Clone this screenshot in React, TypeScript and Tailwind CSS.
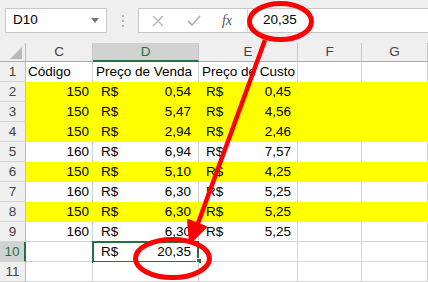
import React from "react";

type Row = {
  n: number;
  c?: string;
  d?: string;
  e?: string;
  yellow?: boolean;
  header?: boolean;
};

const rows: Row[] = [
  { n: 1, header: true },
  { n: 2, c: "150", d: "0,54", e: "0,45", yellow: true },
  { n: 3, c: "150", d: "5,47", e: "4,56", yellow: true },
  { n: 4, c: "150", d: "2,94", e: "2,46", yellow: true },
  { n: 5, c: "160", d: "6,94", e: "7,57" },
  { n: 6, c: "150", d: "5,10", e: "4,25", yellow: true },
  { n: 7, c: "160", d: "6,30", e: "5,25" },
  { n: 8, c: "150", d: "6,30", e: "5,25", yellow: true },
  { n: 9, c: "160", d: "6,30", e: "5,25" },
  { n: 10 },
  { n: 11 },
];

const font = { fontFamily: '"Liberation Sans", Arial, sans-serif' };

function DataRow({ r, next }: { r: Row; next?: Row }) {
  const yellow = !!r.yellow;
  const bottomGray = !yellow && !(next && next.yellow) && r.n !== 1;
  const rowBg = yellow ? "bg-[#ffff00]" : "bg-white";
  const vb = yellow ? "border-[#ffff00]" : "border-[#d4d4d4]";
  const hb = bottomGray ? "border-b border-b-[#d4d4d4]" : "";
  const sel = r.n === 10;
  return (
    <div className="grid grid-cols-[26px_67px_106px_99px_64px_66px] h-[20px] text-[13.5px] text-black leading-none">
      <div
        className={`flex items-center justify-center border-b border-b-[#d4d4d4] ${
          sel
            ? "bg-[#d2d2d2] text-[#217346] border-r-2 border-r-[#217346]"
            : "bg-[#efefef] text-[#444] border-r border-r-[#bdbdbd]"
        }`}
      >
        {r.n}
      </div>
      {/* C */}
      <div className={`flex items-center ${rowBg} border-r ${vb} ${hb} ${r.header ? "pl-[2px]" : "justify-end pr-[3px]"}`}>
        {r.header ? "Código" : r.c}
      </div>
      {/* D */}
      <div className={`relative flex items-center ${rowBg} border-r ${vb} ${hb} ${r.header ? "pl-[3px]" : "justify-between pl-[8px] pr-[7px]"}`}>
        {r.header ? (
          "Preço de Venda"
        ) : r.d ? (
          <>
            <span>R$</span>
            <span>{r.d}</span>
          </>
        ) : sel ? (
          <>
            <span>R$</span>
            <span>20,35</span>
            <div className="absolute left-[-1px] top-[-1px] w-[107px] h-[22px] border-2 border-[#217346]" />
            <div className="absolute right-[-4px] bottom-[-3px] w-[6px] h-[6px] bg-[#217346] border border-white" />
          </>
        ) : null}
      </div>
      {/* E */}
      <div className={`flex items-center ${rowBg} border-r ${vb} ${hb} ${r.header ? "pl-[3px]" : "justify-between pl-[7px] pr-[6px]"}`}>
        {r.header ? (
          "Preço de Custo"
        ) : r.e ? (
          <>
            <span>R$</span>
            <span>{r.e}</span>
          </>
        ) : null}
      </div>
      <div className={`${rowBg} border-r ${vb} ${hb}`} />
      <div className={`${rowBg} border-r ${vb} ${hb}`} />
    </div>
  );
}

export default function App() {
  return (
    <div className="relative w-[428px] h-[282px] overflow-hidden bg-white flex flex-col" style={font}>
      {/* formula bar area */}
      <div className="h-[43px] bg-[#efefef] flex items-start pt-[8px]">
        <div className="ml-[5px] w-[102px] h-[25px] bg-white border border-[#c6c6c6] flex items-center justify-between pl-[7px] pr-[7px] text-[13.5px] text-black">
          <span>D10</span>
          <svg width="8" height="5" viewBox="0 0 8 5">
            <path d="M0 0 L8 0 L4 5 Z" fill="#777" />
          </svg>
        </div>
        <div className="w-[31px] h-[25px] flex flex-col items-center justify-center gap-[3px]">
          <div className="w-[2px] h-[2px] bg-[#b4b4b4]" />
          <div className="w-[2px] h-[2px] bg-[#b4b4b4]" />
          <div className="w-[2px] h-[2px] bg-[#b4b4b4]" />
        </div>
        <div className="flex-1 h-[25px] bg-white border border-[#c6c6c6] border-r-0 flex items-center">
          <div className="w-[108px] h-full flex items-center">
            <div className="w-[38px] flex justify-center">
              <svg width="12" height="12" viewBox="0 0 12 12">
                <path d="M1 1 L11 11 M11 1 L1 11" stroke="#b3b3b3" strokeWidth="1.3" />
              </svg>
            </div>
            <div className="w-[34px] flex justify-center">
              <svg width="14" height="12" viewBox="0 0 14 12">
                <path d="M1 6 L5 10 L13 1" stroke="#b3b3b3" strokeWidth="1.8" fill="none" />
              </svg>
            </div>
            <div
              className="w-[32px] flex justify-center text-[14px] italic text-[#555]"
              style={{ fontFamily: '"Liberation Serif", "Times New Roman", serif' }}
            >
              fx
            </div>
          </div>
          <div className="h-full border-l border-[#d4d4d4] flex items-center pl-[15px] text-[13.5px] text-black">
            20,35
          </div>
        </div>
      </div>
      {/* column headers */}
      <div className="grid grid-cols-[26px_67px_106px_99px_64px_66px] h-[19px] bg-[#efefef] text-[13.5px] text-[#444] leading-none">
        <div className="relative border-r border-r-[#bdbdbd] border-b border-b-[#ababab]">
          <svg className="absolute left-[10px] top-[4px]" width="13" height="13" viewBox="0 0 13 13">
            <path d="M12 0 L12 12 L0 12 Z" fill="#b9b9b9" />
          </svg>
        </div>
        <div className="flex items-center justify-center border-r border-r-[#c6c6c6] border-b border-b-[#ababab]">C</div>
        <div className="flex items-center justify-center bg-[#d2d2d2] text-[#217346] border-r border-r-[#c6c6c6] border-b-2 border-b-[#217346]">D</div>
        <div className="flex items-center justify-center border-r border-r-[#c6c6c6] border-b border-b-[#ababab]">E</div>
        <div className="flex items-center justify-center border-r border-r-[#c6c6c6] border-b border-b-[#ababab]">F</div>
        <div className="flex items-center justify-center border-r border-r-[#c6c6c6] border-b border-b-[#ababab]">G</div>
      </div>
      {rows.map((r, i) => (
        <DataRow key={r.n} r={r} next={rows[i + 1]} />
      ))}
      {/* red annotation overlay */}
      <svg className="absolute left-0 top-0 pointer-events-none" width="428" height="282" viewBox="0 0 428 282">
        <ellipse cx="280.5" cy="21.5" rx="31" ry="18" fill="none" stroke="#ff0000" strokeWidth="5" />
        <ellipse cx="172.5" cy="258.5" rx="37" ry="19" fill="none" stroke="#ff0000" strokeWidth="5" />
        <line x1="265" y1="40" x2="197" y2="226" stroke="#ff0000" strokeWidth="4.5" />
        <path d="M190 243 L206 227 L188 220 Z" fill="#ff0000" stroke="#ff0000" strokeWidth="2" strokeLinejoin="round" />
      </svg>
    </div>
  );
}
